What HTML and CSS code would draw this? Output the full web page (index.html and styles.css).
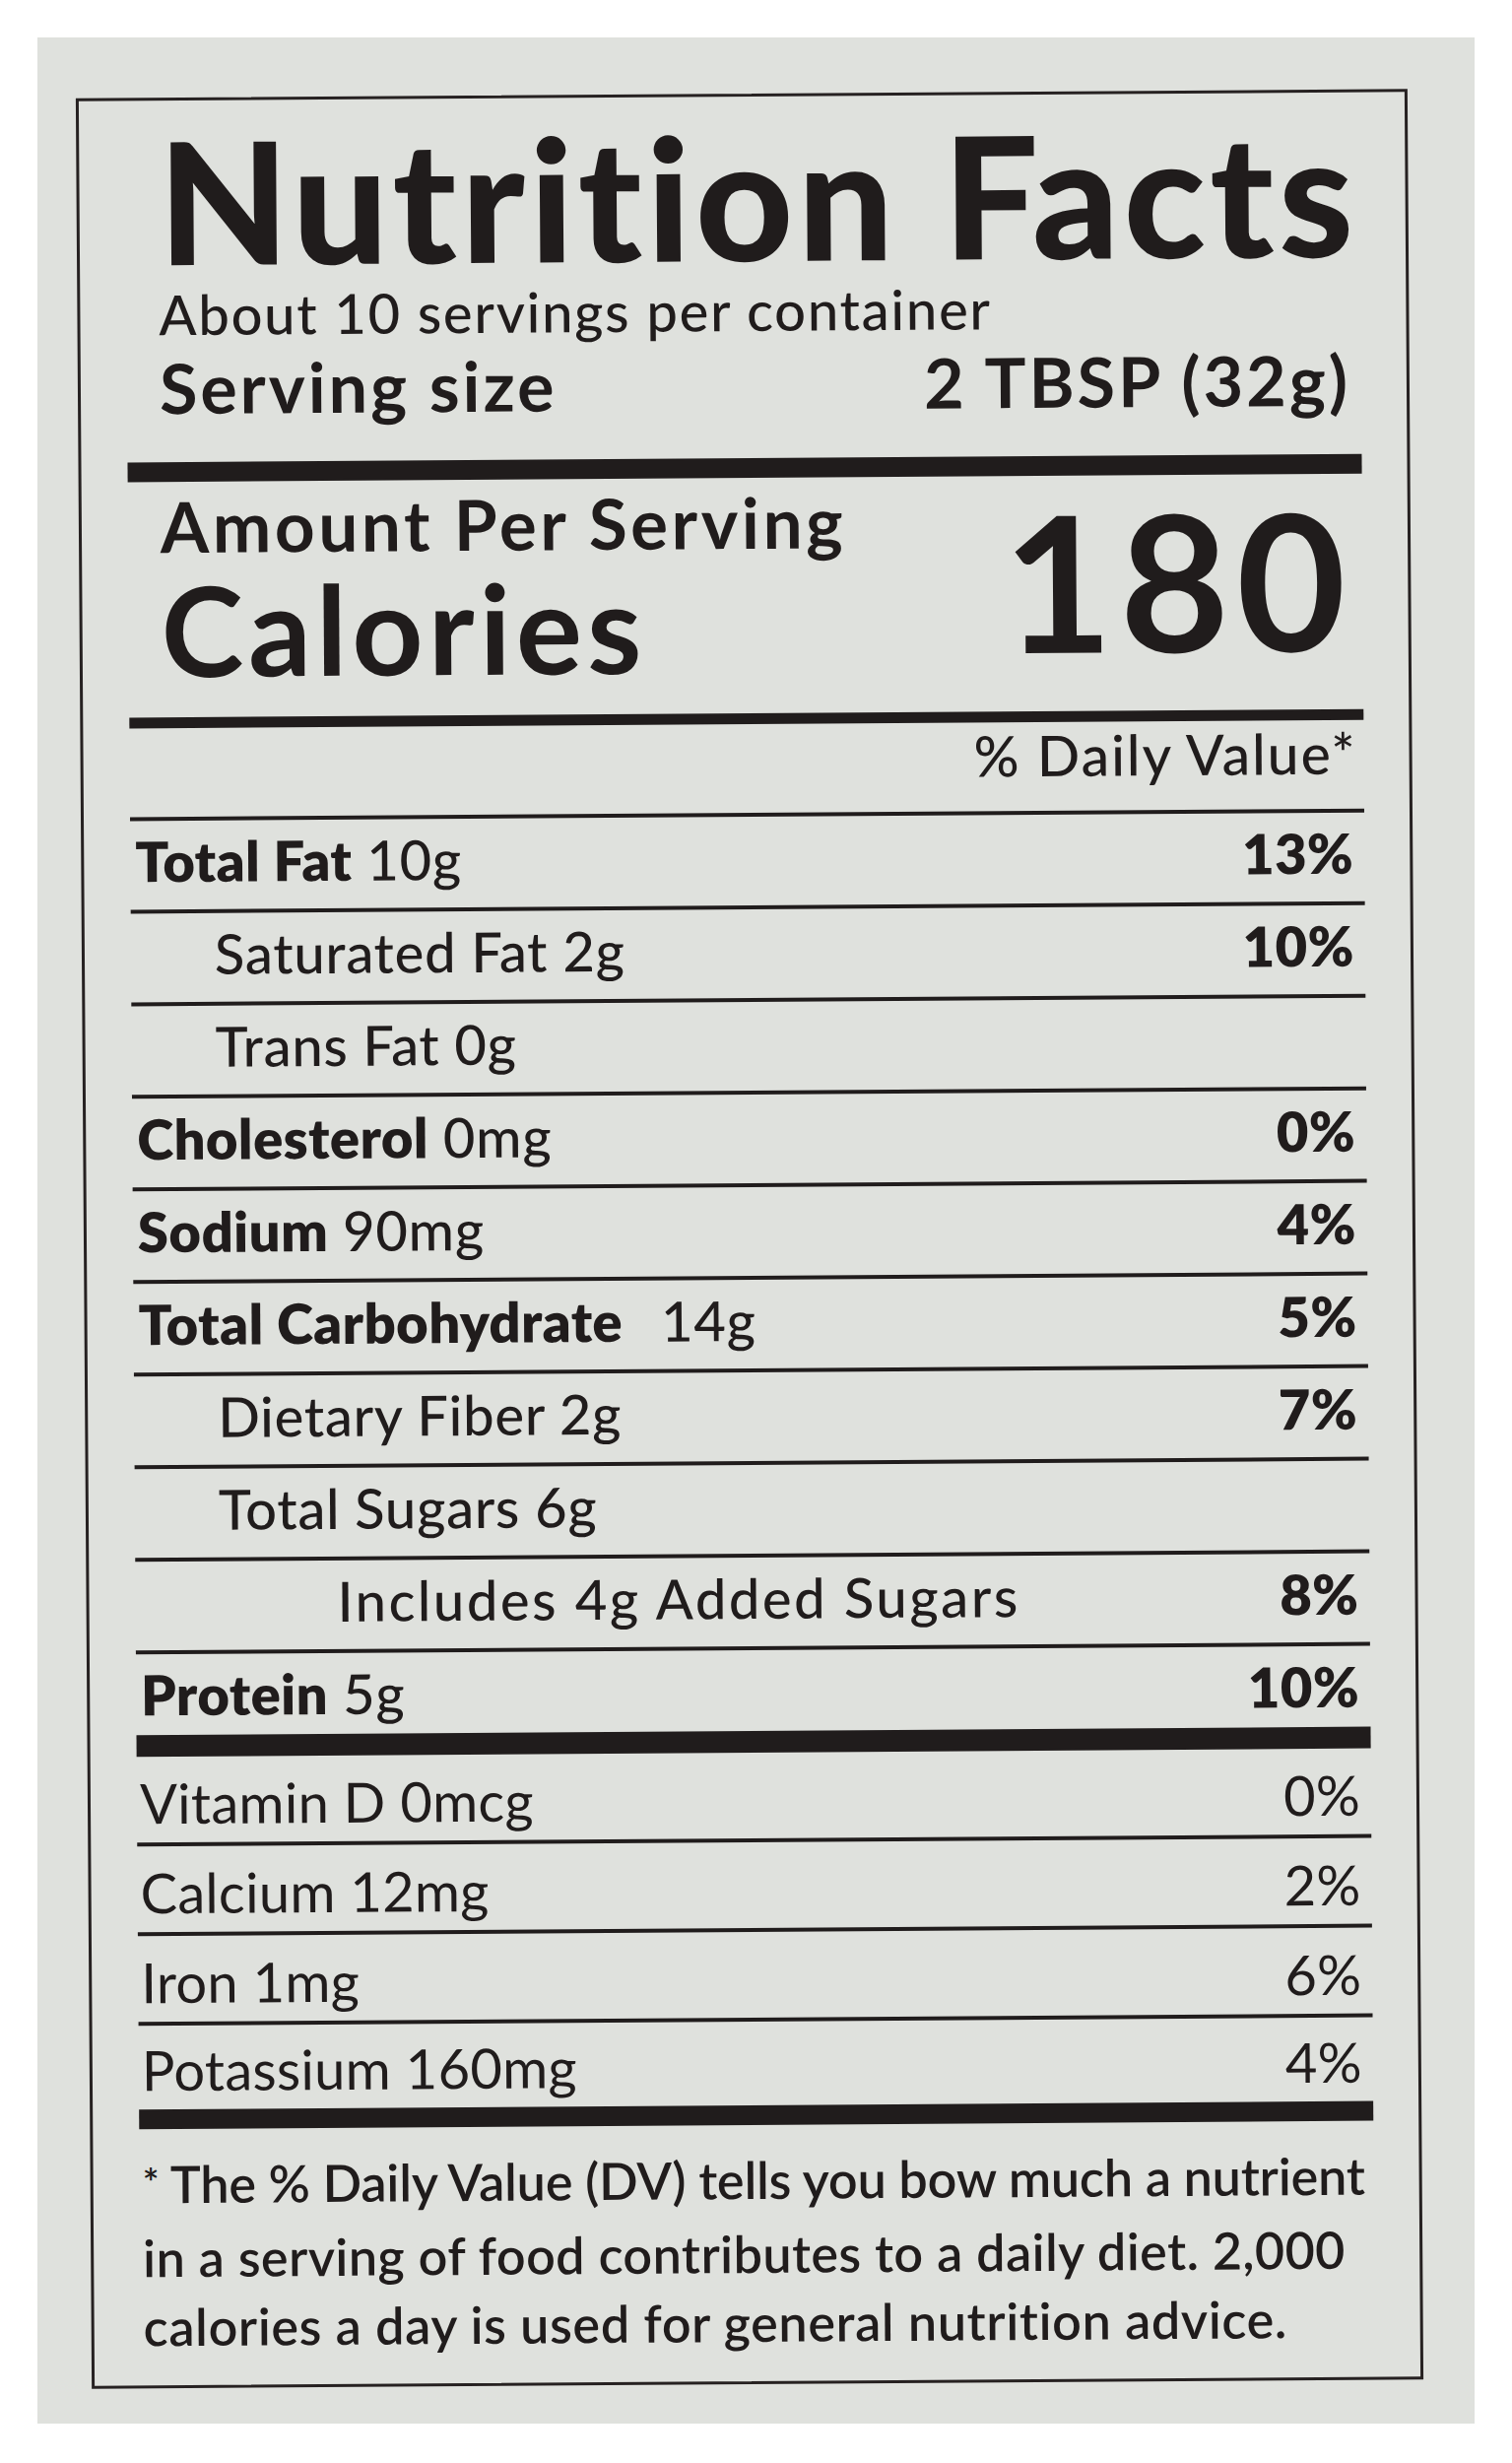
FILE: index.html
```html
<!DOCTYPE html>
<html lang="en">
<head>
<meta charset="utf-8">
<title>Nutrition Facts</title>
<link rel="stylesheet" href="styles.css">
</head>
<body>
<div class="panel">
  <div class="label">
    <div class="head">
      <div class="title">Nutrition Facts</div>
      <div class="servings">About 10 servings per container</div>
      <div class="size"><span>Serving size</span><span class="size-val">2 TBSP (32g)</span></div>
    </div>
    <div class="bar bar-thick"></div>
    <div class="cal">
      <div class="cal-left">
        <div class="amount">Amount Per Serving</div>
        <div class="calories">Calories</div>
      </div>
      <div class="cal-num">180</div>
    </div>
    <div class="bar bar-med"></div>
    <div class="dv-head">% Daily Value*</div>
    <div class="rule"></div>
    <div class="row"><span><b>Total Fat</b> 10g</span><b>13%</b></div>
    <div class="row ind1"><span>Saturated Fat 2g</span><b>10%</b></div>
    <div class="row ind1"><span>Trans Fat 0g</span></div>
    <div class="row"><span><b>Cholesterol</b> 0mg</span><b>0%</b></div>
    <div class="row"><span><b>Sodium</b> 90mg</span><b>4%</b></div>
    <div class="row"><span><b>Total Carbohydrate</b> <span class="gap">14g</span></span><b>5%</b></div>
    <div class="row ind1"><span>Dietary Fiber 2g</span><b>7%</b></div>
    <div class="row ind1"><span>Total Sugars 6g</span></div>
    <div class="row ind2"><span class="wide">Includes 4g Added Sugars</span><b>8%</b></div>
    <div class="row row-last"><span><b>Protein</b> 5g</span><b>10%</b></div>
    <div class="bar bar-thick2"></div>
    <div class="vrow"><span>Vitamin D 0mcg</span><span>0%</span></div>
    <div class="vrow"><span>Calcium 12mg</span><span>2%</span></div>
    <div class="vrow"><span>Iron 1mg</span><span>6%</span></div>
    <div class="vrow vrow-last"><span>Potassium 160mg</span><span>4%</span></div>
    <div class="bar bar-thick3"></div>
    <p class="foot"><span class="fl fl1"><sup class="ast">*</sup> The % Daily Value (DV) tells you bow much a nutrient</span><span class="fl fl2">in a serving of food contributes to a daily diet. 2,000</span><span class="fl fl3">calories a day is used for general nutrition advice.</span></p>
  </div>
</div>
</body>
</html>
```

FILE: styles.css
```css
* { box-sizing: border-box; }
html, body { margin: 0; padding: 0; background: #ffffff; }
body {
  font-family: "Lato", "Open Sans", sans-serif;
  color: #201c1c;
  width: 1535px;
  height: 2500px;
  padding-top: 38px;
  padding-left: 38px;
}
.panel {
  width: 1459px;
  height: 2422px;
  background: #dfe1dd;
  padding-top: 57px;
  padding-left: 47px;
}
.label {
  width: 1352px;
  height: 2325px;
  border: 3px solid #262121;
  padding: 0 46px 0 47px;
  display: flex;
  flex-direction: column;
  transform: rotate(-0.4deg);
  white-space: nowrap;
}
.head { padding: 0 14px 0 33px; }
.title {
  font-size: 172px;
  font-weight: 900;
  line-height: 1;
  margin-top: 15px;
  letter-spacing: 4.6px;
}
.servings {
  font-size: 56px;
  font-weight: 500;
  line-height: 1;
  margin-top: 2px;
  letter-spacing: 1.8px;
}
.size {
  display: flex;
  justify-content: space-between;
  font-size: 70px;
  font-weight: 700;
  line-height: 1;
  margin-top: 11px;
  letter-spacing: 3px;
}
.size-val { margin-right: -3px; }
.bar { background: #201c1c; flex: none; }
.bar-thick { height: 20px; margin-top: 41px; }
.cal {
  display: flex;
  justify-content: space-between;
  padding: 0 17px 0 33px;
}
.amount { font-size: 71px; font-weight: 700; line-height: 1; margin-top: 9px; letter-spacing: 3.6px; }
.calories { font-size: 126px; font-weight: 700; line-height: 1; margin-top: 7px; letter-spacing: 5px; }
.cal-num { font-size: 192px; font-weight: 700; line-height: 1; margin-top: 10px; letter-spacing: 7px; margin-right: -7px; }
.bar-med { height: 11px; margin-top: 26px; }
.dv-head {
  font-size: 57px;
  font-weight: 500;
  line-height: 1;
  text-align: right;
  padding-right: 7px;
  margin-top: 5px;
  letter-spacing: 2px;
}
.rule { height: 4px; background: #201c1c; margin-top: 28px; flex: none; }
.row {
  height: 94px;
  flex: none;
  display: flex;
  justify-content: space-between;
  align-items: flex-end;
  padding: 0 11px 21px 5px;
  border-bottom: 4px solid #201c1c;
  font-size: 56px;
  font-weight: 500;
  line-height: 1;
  letter-spacing: 0.8px;
}
.row b { font-weight: 800; letter-spacing: 0.5px; }
.row.ind1 { padding-left: 85px; }
.row.ind2 { padding-left: 205px; }
.gap { margin-left: 24px; }
.wide { letter-spacing: 2.6px; }
.row-last { height: 82px; border-bottom: 0; padding-bottom: 13px; }
.bar-thick2 { height: 22px; }
.vrow {
  height: 91px;
  flex: none;
  display: flex;
  justify-content: space-between;
  align-items: flex-end;
  padding: 0 11px 12px 3px;
  border-bottom: 4px solid #201c1c;
  font-size: 56px;
  font-weight: 400;
  line-height: 1;
  letter-spacing: 0.3px;
}
.vrow-last { border-bottom: 0; height: 85px; }
.bar-thick3 { height: 20px; }
.foot {
  margin: 20px 0 0 3px;
  font-size: 52px;
  font-weight: 600;
  line-height: 70px;
}
.fl { display: block; }
.fl1 { letter-spacing: -0.1px; }
.fl2 { letter-spacing: 0.5px; }
.fl3 { letter-spacing: 0.7px; }
.ast { font-size: 40px; vertical-align: 0; position: relative; top: -6px; }
```
